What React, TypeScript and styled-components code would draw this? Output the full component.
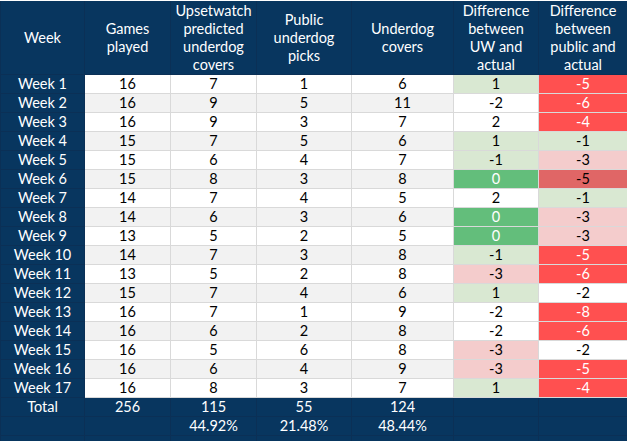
import { createGlobalStyle, styled } from 'styled-components';

type Tone = 'none' | 'greenLight' | 'green' | 'redLight' | 'redMid' | 'red';

interface WeekRow {
  games: number;
  predicted: number;
  publicPicks: number;
  covers: number;
  uwDiff: number;
  uwTone: Tone;
  pubDiff: number;
  pubTone: Tone;
}

const NAVY = '#08365f';

const COLUMN_WIDTHS = [84, 86, 86, 95, 102, 85, 89];

const HEADERS: string[][] = [
  ['Week'],
  ['Games', 'played'],
  ['Upsetwatch', 'predicted', 'underdog', 'covers'],
  ['Public', 'underdog', 'picks'],
  ['Underdog', 'covers'],
  ['Difference', 'between', 'UW and', 'actual'],
  ['Difference', 'between', 'public and', 'actual'],
];

const ROWS: WeekRow[] = [
  { games: 16, predicted: 7, publicPicks: 1, covers: 6, uwDiff: 1, uwTone: 'greenLight', pubDiff: -5, pubTone: 'red' },
  { games: 16, predicted: 9, publicPicks: 5, covers: 11, uwDiff: -2, uwTone: 'none', pubDiff: -6, pubTone: 'red' },
  { games: 16, predicted: 9, publicPicks: 3, covers: 7, uwDiff: 2, uwTone: 'none', pubDiff: -4, pubTone: 'red' },
  { games: 15, predicted: 7, publicPicks: 5, covers: 6, uwDiff: 1, uwTone: 'greenLight', pubDiff: -1, pubTone: 'greenLight' },
  { games: 15, predicted: 6, publicPicks: 4, covers: 7, uwDiff: -1, uwTone: 'greenLight', pubDiff: -3, pubTone: 'redLight' },
  { games: 15, predicted: 8, publicPicks: 3, covers: 8, uwDiff: 0, uwTone: 'green', pubDiff: -5, pubTone: 'redMid' },
  { games: 14, predicted: 7, publicPicks: 4, covers: 5, uwDiff: 2, uwTone: 'none', pubDiff: -1, pubTone: 'greenLight' },
  { games: 14, predicted: 6, publicPicks: 3, covers: 6, uwDiff: 0, uwTone: 'green', pubDiff: -3, pubTone: 'redLight' },
  { games: 13, predicted: 5, publicPicks: 2, covers: 5, uwDiff: 0, uwTone: 'green', pubDiff: -3, pubTone: 'redLight' },
  { games: 14, predicted: 7, publicPicks: 3, covers: 8, uwDiff: -1, uwTone: 'greenLight', pubDiff: -5, pubTone: 'red' },
  { games: 13, predicted: 5, publicPicks: 2, covers: 8, uwDiff: -3, uwTone: 'redLight', pubDiff: -6, pubTone: 'red' },
  { games: 15, predicted: 7, publicPicks: 4, covers: 6, uwDiff: 1, uwTone: 'greenLight', pubDiff: -2, pubTone: 'none' },
  { games: 16, predicted: 7, publicPicks: 1, covers: 9, uwDiff: -2, uwTone: 'none', pubDiff: -8, pubTone: 'red' },
  { games: 16, predicted: 6, publicPicks: 2, covers: 8, uwDiff: -2, uwTone: 'none', pubDiff: -6, pubTone: 'red' },
  { games: 16, predicted: 5, publicPicks: 6, covers: 8, uwDiff: -3, uwTone: 'redLight', pubDiff: -2, pubTone: 'none' },
  { games: 16, predicted: 6, publicPicks: 4, covers: 9, uwDiff: -3, uwTone: 'redLight', pubDiff: -5, pubTone: 'red' },
  { games: 16, predicted: 8, publicPicks: 3, covers: 7, uwDiff: 1, uwTone: 'greenLight', pubDiff: -4, pubTone: 'red' },
];

const TONES: Record<Tone, { bg: string; fg: string }> = {
  none: { bg: '#ffffff', fg: '#000000' },
  greenLight: { bg: '#d9e8d2', fg: '#000000' },
  green: { bg: '#63be7b', fg: '#ffffff' },
  redLight: { bg: '#f4cccc', fg: '#000000' },
  redMid: { bg: '#e06666', fg: '#000000' },
  red: { bg: '#ff5050', fg: '#ffffff' },
};

const GlobalStyle = createGlobalStyle`
  html, body {
    margin: 0;
    padding: 0;
    background: #ffffff;
    overflow: hidden;
  }
  body {
    font-family: Lato, "Liberation Sans", sans-serif;
  }
`;

const Page = styled.div`
  padding-top: 1px;
  width: 627px;
`;

const Sheet = styled.table`
  width: 627px;
  table-layout: fixed;
  border-collapse: collapse;
  font-size: 14.5px;
  line-height: 18px;
`;

const HeadCell = styled.th`
  height: 73px;
  padding: 0 2px;
  background: ${NAVY};
  color: #ffffff;
  font-weight: 400;
  text-align: center;
  vertical-align: middle;
  border: 1px solid #0b3056;
  border-top: none;
`;

const HeadLine = styled.span`
  display: block;
  white-space: nowrap;
`;

const BodyRow = styled.tr`
  height: 19px;
`;

const WeekCell = styled.th`
  padding: 0;
  background: ${NAVY};
  color: #ffffff;
  font-weight: 400;
  text-align: center;
  border: 1px solid #0b3056;
`;

const DataCell = styled.td<{ $band: boolean }>`
  padding: 0;
  background: ${({ $band }) => ($band ? '#f2f2f2' : '#ffffff')};
  color: #000000;
  text-align: center;
  border: 1px solid #d9d9d9;
`;

const DiffCell = styled.td<{ $tone: Tone }>`
  padding: 0;
  background: ${({ $tone }) => TONES[$tone].bg};
  color: ${({ $tone }) => TONES[$tone].fg};
  text-align: center;
  border: 1px solid #d9d9d9;
`;

const FootCell = styled.td`
  padding: 0;
  background: ${NAVY};
  color: #ffffff;
  text-align: center;
  border: 1px solid #0b3056;
`;

export default function App() {
  return (
    <Page>
      <GlobalStyle />
      <Sheet>
        <colgroup>
          {COLUMN_WIDTHS.map((w, i) => (
            <col key={i} style={{ width: w }} />
          ))}
        </colgroup>
        <thead>
          <tr>
            {HEADERS.map((lines, i) => (
              <HeadCell key={i}>
                {lines.map((line) => (
                  <HeadLine key={line}>{line}</HeadLine>
                ))}
              </HeadCell>
            ))}
          </tr>
        </thead>
        <tbody>
          {ROWS.map((row, i) => {
            const band = i % 2 === 1;
            return (
              <BodyRow key={i}>
                <WeekCell>Week {i + 1}</WeekCell>
                <DataCell $band={band}>{row.games}</DataCell>
                <DataCell $band={band}>{row.predicted}</DataCell>
                <DataCell $band={band}>{row.publicPicks}</DataCell>
                <DataCell $band={band}>{row.covers}</DataCell>
                <DiffCell $tone={row.uwTone}>{row.uwDiff}</DiffCell>
                <DiffCell $tone={row.pubTone}>{row.pubDiff}</DiffCell>
              </BodyRow>
            );
          })}
          <BodyRow>
            <FootCell>Total</FootCell>
            <FootCell>256</FootCell>
            <FootCell>115</FootCell>
            <FootCell>55</FootCell>
            <FootCell>124</FootCell>
            <FootCell />
            <FootCell />
          </BodyRow>
          <BodyRow>
            <FootCell />
            <FootCell />
            <FootCell>44.92%</FootCell>
            <FootCell>21.48%</FootCell>
            <FootCell>48.44%</FootCell>
            <FootCell />
            <FootCell />
          </BodyRow>
          <BodyRow>
            <FootCell />
            <FootCell />
            <FootCell />
            <FootCell />
            <FootCell />
            <FootCell />
            <FootCell />
          </BodyRow>
        </tbody>
      </Sheet>
    </Page>
  );
}
